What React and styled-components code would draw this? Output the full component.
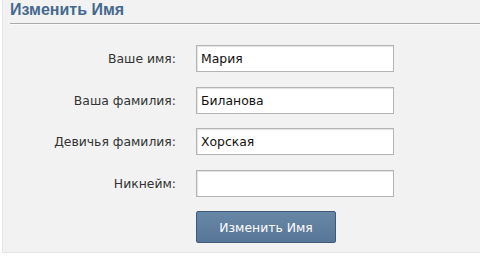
import React from "react";
import styled, { createGlobalStyle } from "styled-components";

const Global = createGlobalStyle`
  html, body {
    margin: 0;
    padding: 0;
    background: #ffffff;
  }
  body {
    font-family: Tahoma, "DejaVu Sans", "Liberation Sans", sans-serif;
  }
`;

const fields = [
  { label: "Ваше имя:", value: "Мария" },
  { label: "Ваша фамилия:", value: "Биланова" },
  { label: "Девичья фамилия:", value: "Хорская" },
  { label: "Никнейм:", value: "" },
];

export default function App() {
  return (
    <>
      <Global />
      <Panel>
        <Header>
          <Title>Изменить Имя</Title>
        </Header>
        <Form>
          {fields.map((f) => (
            <React.Fragment key={f.label}>
              <Label>{f.label}</Label>
              <Input type="text" defaultValue={f.value} />
            </React.Fragment>
          ))}
          <span />
          <Button type="button">Изменить Имя</Button>
        </Form>
      </Panel>
    </>
  );
}

const Panel = styled.div`
  width: 478px;
  height: 253px;
  margin-left: 2px;
  box-sizing: border-box;
  background: #f2f2f2;
  border-left: 1px solid #e6e6e6;
  border-bottom: 1px solid #e6e6e6;
  display: flex;
  flex-direction: column;
`;

const Header = styled.div`
  margin-left: 7px;
  height: 24px;
  border-bottom: 1px solid #a9a9a9;
  box-shadow: 0 1px 0 #fafafa;
  display: flex;
  align-items: flex-end;
  padding-bottom: 4px;
  box-sizing: border-box;
`;

const Title = styled.h1`
  margin: 0;
  font-family: "Liberation Sans", Arial, sans-serif;
  font-size: 16px;
  font-weight: 700;
  color: #45688e;
  line-height: 18px;
`;

const Form = styled.div`
  display: grid;
  grid-template-columns: 173px 198px;
  column-gap: 20px;
  row-gap: 14.5px;
  grid-auto-rows: 27px;
  margin-top: 21px;
  align-items: center;
`;

const Label = styled.label`
  text-align: right;
  font-family: "DejaVu Sans", sans-serif;
  font-size: 12.4px;
  color: #333333;
`;

const Input = styled.input`
  box-sizing: border-box;
  height: 27px;
  width: 198px;
  border: 1px solid #b4b4b4;
  background: #ffffff;
  box-shadow: inset 1px 1px 1px #e2e2e2;
  padding: 0 4px;
  font-family: "DejaVu Sans", sans-serif;
  font-size: 12.4px;
  color: #111;
  outline: none;
`;

const Button = styled.button`
  box-sizing: border-box;
  width: 140px;
  height: 32px;
  align-self: start;
  border: 1px solid #3e5a78;
  border-radius: 2px;
  background: linear-gradient(#6886a6, #587697);
  color: #ffffff;
  font-family: "DejaVu Sans", sans-serif;
  font-size: 12.4px;
  cursor: pointer;
`;
